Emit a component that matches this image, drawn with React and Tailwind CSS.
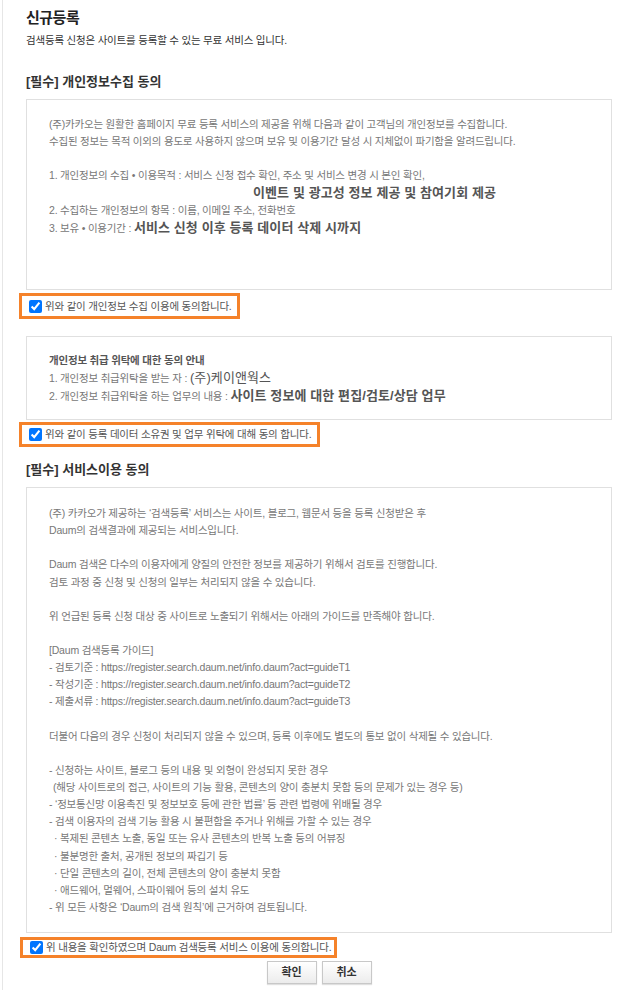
import React from "react";

const body = "text-[10.5px] leading-[17px] tracking-[-0.2px] text-[#777]";
const big = "text-[13px] font-bold tracking-[0.1px] text-[#555]";

function Agree({ children, className }) {
  return (
    <label
      className={
        "flex w-fit items-center gap-[3px] border-[3px] border-[#f5822a] pl-[7px] pr-[3px] text-[10.5px] tracking-[-0.2px] text-[#555] " +
        className
      }
    >
      <input type="checkbox" defaultChecked className="h-[13px] w-[13px] shrink-0" />
      <span className="leading-[17px]">{children}</span>
    </label>
  );
}

export default function App() {
  return (
    <div className="min-h-[990px] bg-white font-['Liberation_Sans','Noto_Sans_CJK_KR',sans-serif]">
      <div className="ml-[2px] min-h-[990px] border-l border-[#e6e6e6] pl-[23px] pr-[29px] pt-[8px]">
        <h1 className="text-[15px] font-bold leading-[20px] tracking-[-0.5px] text-[#222]">신규등록</h1>
        <p className="mt-[4px] text-[10.5px] leading-[17px] tracking-[-0.2px] text-[#333]">
          검색등록 신청은 사이트를 등록할 수 있는 무료 서비스 입니다.
        </p>

        <h2 className="mt-[24px] text-[13px] font-bold leading-[18px] text-[#333]">
          [필수] 개인정보수집 동의
        </h2>
        <div className="mt-[8px] h-[191px] border border-[#e0e0e0] px-[22px] pt-[16px]">
          <div className={body}>
            <p>(주)카카오는 원활한 홈페이지 무료 등록 서비스의 제공을 위해 다음과 같이 고객님의 개인정보를 수집합니다.</p>
            <p>수집된 정보는 목적 이외의 용도로 사용하지 않으며 보유 및 이용기간 달성 시 지체없이 파기함을 알려드립니다.</p>
            <p>&nbsp;</p>
            <p>1. 개인정보의 수집 • 이용목적 : 서비스 신청 접수 확인, 주소 및 서비스 변경 시 본인 확인,</p>
            <p className="pl-[204px]">
              <span className={big}>이벤트 및 광고성 정보 제공 및 참여기회 제공</span>
            </p>
            <p>2. 수집하는 개인정보의 항목 : 이름, 이메일 주소, 전화번호</p>
            <p>
              3. 보유 • 이용기간 : <span className={big}>서비스 신청 이후 등록 데이터 삭제 시까지</span>
            </p>
          </div>
        </div>
        <Agree className="-ml-[7px] mt-[3px] h-[26px] pr-[5px]">위와 같이 개인정보 수집 이용에 동의합니다.</Agree>

        <div className="mt-[17px] h-[84px] border border-[#e0e0e0] px-[22px] pt-[14px]">
          <div className="text-[10.5px] leading-[18px] tracking-[-0.2px] text-[#777]">
            <p className="font-bold text-[#555]">개인정보 취급 위탁에 대한 동의 안내</p>
            <p>
              1. 개인정보 취급위탁을 받는 자 : <span className="text-[13px] tracking-[0.1px] text-[#555]">(주)케이앤웍스</span>
            </p>
            <p>
              2. 개인정보 취급위탁을 하는 업무의 내용 : <span className={big}>사이트 정보에 대한 편집/검토/상담 업무</span>
            </p>
          </div>
        </div>
        <Agree className="-ml-[7px] mt-[2px] h-[25px] pr-[6px]">위와 같이 등록 데이터 소유권 및 업무 위탁에 대해 동의 합니다.</Agree>

        <h2 className="mt-[14px] text-[13px] font-bold leading-[18px] text-[#333]">
          [필수] 서비스이용 동의
        </h2>
        <div className="mt-[8px] h-[446px] border border-[#e0e0e0] px-[22px] pt-[17px]">
          <div className="text-[10.5px] leading-[17.13px] tracking-[-0.2px] text-[#777]">
            <p>(주) 카카오가 제공하는 ‘검색등록’ 서비스는 사이트, 블로그, 웹문서 등을 등록 신청받은 후</p>
            <p>Daum의 검색결과에 제공되는 서비스입니다.</p>
            <p>&nbsp;</p>
            <p>Daum 검색은 다수의 이용자에게 양질의 안전한 정보를 제공하기 위해서 검토를 진행합니다.</p>
            <p>검토 과정 중 신청 및 신청의 일부는 처리되지 않을 수 있습니다.</p>
            <p>&nbsp;</p>
            <p>위 언급된 등록 신청 대상 중 사이트로 노출되기 위해서는 아래의 가이드를 만족해야 합니다.</p>
            <p>&nbsp;</p>
            <p>[Daum 검색등록 가이드]</p>
            <p>- 검토기준 : https://register.search.daum.net/info.daum?act=guideT1</p>
            <p>- 작성기준 : https://register.search.daum.net/info.daum?act=guideT2</p>
            <p>- 제출서류 : https://register.search.daum.net/info.daum?act=guideT3</p>
            <p>&nbsp;</p>
            <p>더불어 다음의 경우 신청이 처리되지 않을 수 있으며, 등록 이후에도 별도의 통보 없이 삭제될 수 있습니다.</p>
            <p>&nbsp;</p>
            <p>- 신청하는 사이트, 블로그 등의 내용 및 외형이 완성되지 못한 경우</p>
            <p className="pl-[4px]">(해당 사이트로의 접근, 사이트의 기능 활용, 콘텐츠의 양이 충분치 못함 등의 문제가 있는 경우 등)</p>
            <p>- ‘정보통신망 이용촉진 및 정보보호 등에 관한 법률’ 등 관련 법령에 위배될 경우</p>
            <p>- 검색 이용자의 검색 기능 활용 시 불편함을 주거나 위해를 가할 수 있는 경우</p>
            <p className="pl-[5px]">· 복제된 콘텐츠 노출, 동일 또는 유사 콘텐츠의 반복 노출 등의 어뷰징</p>
            <p className="pl-[5px]">· 불분명한 출처, 공개된 정보의 짜깁기 등</p>
            <p className="pl-[5px]">· 단일 콘텐츠의 길이, 전체 콘텐츠의 양이 충분치 못함</p>
            <p className="pl-[5px]">· 애드웨어, 멀웨어, 스파이웨어 등의 설치 유도</p>
            <p>- 위 모든 사항은 ‘Daum의 검색 원칙’에 근거하여 검토됩니다.</p>
          </div>
        </div>
        <Agree className="-ml-[6px] mt-[4px] h-[21px]">위 내용을 확인하였으며 Daum 검색등록 서비스 이용에 동의합니다.</Agree>

        <div className="mt-[3px] flex justify-center gap-[5px]">
          <button className="h-[23px] w-[50px] border border-[#c8c8c8] bg-linear-to-b from-white to-[#ececec] text-[11px] font-bold text-[#333] shadow-[0_1px_1px_rgba(0,0,0,0.12)]">
            확인
          </button>
          <button className="h-[23px] w-[50px] border border-[#c8c8c8] bg-linear-to-b from-white to-[#ececec] text-[11px] font-bold text-[#333] shadow-[0_1px_1px_rgba(0,0,0,0.12)]">
            취소
          </button>
        </div>
      </div>
    </div>
  );
}
